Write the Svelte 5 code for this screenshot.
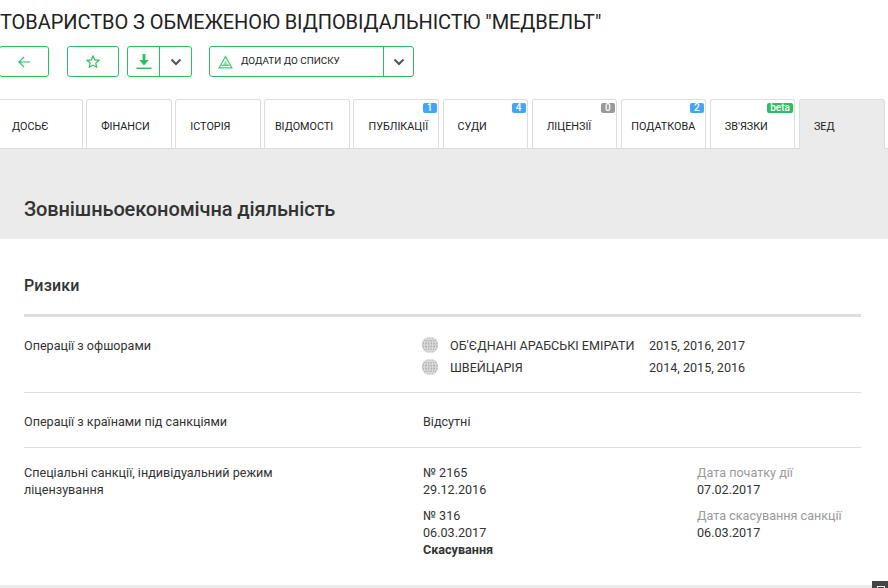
<script>
  const tabs = [
    { name: 'Досьє' },
    { name: 'Фінанси' },
    { name: 'Історія' },
    { name: 'Відомості', tight: true },
    { name: 'Публікації', badge: '1' },
    { name: 'Суди', badge: '4' },
    { name: 'Ліцензії', badge: '0', kind: 'grey' },
    { name: 'Податкова', badge: '2', tight: true },
    { name: "Зв'язки", badge: 'beta', kind: 'green' },
    { name: 'ЗЕД', active: true }
  ]
  const offshores = [
    { country: "Об'єднані Арабські Емірати", years: '2015, 2016, 2017' },
    { country: 'Швейцарія', years: '2014, 2015, 2016' }
  ]
</script>

{#snippet chevron()}
  <svg width="12" height="8" viewBox="0 0 12 8"><path d="M1.500 1.500 6 6l4.500-4.500" fill="none" stroke="#555" stroke-width="2" /></svg>
{/snippet}

{#snippet globe()}
  <svg class="globe" width="16" height="16" viewBox="0 0 16 16">
    <circle cx="8" cy="8" r="8" fill="#b5b5b5" />
    <g fill="none" stroke="#f4f4f4" stroke-width=".6">
      <ellipse cx="8" cy="8" rx="2.800" ry="8" />
      <ellipse cx="8" cy="8" rx="5.800" ry="8" />
      <path d="M8 0v16M0 8h16M.8 5h14.400M.8 11h14.400M2.500 2.300h11M2.500 13.700h11" />
    </g>
  </svg>
{/snippet}

<div class="page">
  <header>
    <h1>ТОВАРИСТВО З ОБМЕЖЕНОЮ ВІДПОВІДАЛЬНІСТЮ "МЕДВЕЛЬТ"</h1>
    <div class="actions">
      <button class="btn back" aria-label="Назад">
        <svg width="12" height="12" viewBox="0 0 12 12"><path d="M6 .8.9 6 6 11.200M.9 6H12" fill="none" stroke="#2dbe60" stroke-width="1.200" /></svg>
      </button>
      <button class="btn star" aria-label="Обране">
        <svg width="14" height="13" viewBox="0 0 14 13"><path d="m7 1 1.700 3.900 4.300.4-3.200 2.800.9 4.100L7 10.100l-3.700 2.100.9-4.100L1 5.300l4.300-.4z" fill="none" stroke="#2dbe60" stroke-width="1.200" /></svg>
      </button>
      <div class="btn split download">
        <span class="part dl">
          <svg width="16" height="16" viewBox="0 0 16 16"><path d="M8 0v8" stroke="#2dbe60" stroke-width="2.800" /><path d="M3.300 6 8 11.500 12.700 6z" fill="#2dbe60" /><path d="M.5 14.300h15" stroke="#2dbe60" stroke-width="1.500" /></svg>
        </span>
        <span class="part more">{@render chevron()}</span>
      </div>
      <div class="btn split addlist">
        <span class="part label">
          <svg width="15" height="14" viewBox="0 0 15 14">
            <path d="M7.500 1.500 13.800 12.800H1.200z" fill="none" stroke="#45c878" stroke-width="1.300" />
            <path d="M7.500 5 10 10H5z" fill="#8fe0ae" />
            <path d="M3.500 10.300h8" stroke="#2dbe60" stroke-width="1" />
          </svg>
          <span>Додати до списку</span>
        </span>
        <span class="part more">{@render chevron()}</span>
      </div>
    </div>
  </header>

  <nav>
    {#each tabs as tab}
      <div class="tab" class:active={tab.active} class:tight={tab.tight}>
        {tab.name}
        {#if tab.badge}
          <span class="badge {tab.kind ?? ''}">{tab.badge}</span>
        {/if}
      </div>
    {/each}
  </nav>

  <section class="hero">
    <h2>Зовнішньоекономічна діяльність</h2>
  </section>

  <main>
    <h3>Ризики</h3>

    <div class="row first">
      <div class="name">Операції з офшорами</div>
      <div class="offshores">
        {#each offshores as item}
          <div class="offshore">
            {@render globe()}
            <span class="country">{item.country}</span>
            <span>{item.years}</span>
          </div>
        {/each}
      </div>
    </div>

    <div class="row second">
      <div class="name">Операції з країнами під санкціями</div>
      <div>Відсутні</div>
    </div>

    <div class="row third">
      <div class="name narrow">Спеціальні санкції, індивідуальний режим ліцензування</div>
      <div class="sanctions">
        <div>№ 2165<br />29.12.2016</div>
        <div><span class="muted">Дата початку дії</span><br />07.02.2017</div>
        <div>№ 316<br />06.03.2017<br /><b>Скасування</b></div>
        <div><span class="muted">Дата скасування санкції</span><br />06.03.2017</div>
      </div>
    </div>
  </main>

  <footer>
    <span class="totop"><i></i></span>
  </footer>
</div>

<style>
  :global(body) {
    margin: 0;
    overflow: hidden;
  }
  .page {
    width: 888px;
    height: 588px;
    overflow: hidden;
    position: relative;
    background: #fff;
    font-family: Roboto, "Noto Sans", sans-serif;
    font-size: 12.6px;
    line-height: 17px;
    color: #333;
  }
  header {
    height: 99px;
    box-sizing: border-box;
    padding-top: 9px;
  }
  h1 {
    margin: 0;
    font-size: 20px;
    letter-spacing: -0.06px;
    line-height: 26px;
    font-weight: 400;
    color: #222;
    white-space: nowrap;
  }
  .actions {
    display: flex;
    align-items: stretch;
    height: 31px;
    margin-top: 11px;
  }
  .btn {
    display: flex;
    align-items: center;
    justify-content: center;
    box-sizing: border-box;
    padding: 0;
    background: #fff;
    border: 1px solid #2dbe60;
    border-radius: 3px;
  }
  .back {
    width: 50px;
    margin-left: -1px;
  }
  .star {
    width: 52px;
    margin-left: 18px;
  }
  .split {
    justify-content: flex-start;
  }
  .download {
    width: 65px;
    margin-left: 8px;
  }
  .addlist {
    width: 205px;
    margin-left: 17px;
  }
  .part {
    display: flex;
    align-items: center;
    justify-content: center;
    height: 100%;
  }
  .dl {
    width: 31px;
  }
  .more {
    flex: 1;
    border-left: 1px solid #2dbe60;
  }
  .label {
    width: 173px;
    justify-content: flex-start;
    box-sizing: border-box;
    padding: 0 0 2px 8px;
    gap: 8px;
    font-size: 9.9px;
    text-transform: uppercase;
    color: #222;
  }
  .label svg {
    margin-top: 2px;
  }
  nav {
    display: flex;
    gap: 3.5px;
    height: 49px;
    margin-left: -2.9px;
  }
  .tab {
    position: relative;
    width: 85.6px;
    box-sizing: border-box;
    height: 49px;
    padding: 18px 0 0 14px;
    border: 1px solid #ddd;
    border-bottom: 0;
    border-radius: 3px 3px 0 0;
    font-size: 10.8px;
    line-height: 17px;
    text-transform: uppercase;
    color: #222;
    white-space: nowrap;
  }
  .tab.tight {
    padding-left: 9.5px;
  }
  .tab.active {
    height: 50px;
    z-index: 1;
    background: #ebebeb;
  }
  .badge {
    position: absolute;
    top: 3px;
    right: 1.5px;
    min-width: 14px;
    box-sizing: border-box;
    height: 10px;
    padding: 0 3px;
    border-radius: 2px;
    background: #42a5f5;
    color: #fff;
    font-size: 10px;
    line-height: 10px;
    font-weight: 500;
    text-align: center;
    text-transform: none;
  }
  .badge.grey {
    background: #999;
  }
  .badge.green {
    background: #2dbe60;
  }
  .hero {
    position: relative;
    height: 91px;
    box-sizing: border-box;
    padding: 48px 24px 0;
    background: #ebebeb;
    border-top: 1px solid #ddd;
  }
  h2 {
    margin: 0;
    font-size: 20px;
    letter-spacing: -0.1px;
    line-height: 24px;
    font-weight: 500;
    color: #333;
  }
  main {
    margin: 0 27px 0 24px;
    padding-top: 36px;
  }
  h3 {
    margin: 0;
    padding-bottom: 18px;
    font-size: 16px;
    letter-spacing: 0.15px;
    line-height: 21px;
    font-weight: 500;
    border-bottom: 3px solid #ddd;
    color: #333;
  }
  .row {
    display: grid;
    grid-template-columns: 399px 1fr;
    border-bottom: 1px solid #ddd;
  }
  .row.first {
    height: 76px;
    padding-top: 20px;
    box-sizing: border-box;
  }
  .row.second {
    height: 55px;
    padding-top: 20px;
    box-sizing: border-box;
  }
  .row.third {
    padding-top: 16px;
    border-bottom: 0;
  }
  .narrow {
    width: 270px;
  }
  .offshores {
    margin-top: -3px;
  }
  .offshore {
    display: flex;
    align-items: center;
    height: 22px;
    margin-left: -1px;
  }
  .globe {
    margin-right: 12px;
  }
  .country {
    width: 199px;
    text-transform: uppercase;
    white-space: nowrap;
  }
  .sanctions {
    display: grid;
    grid-template-columns: 274px 1fr;
    row-gap: 9px;
  }
  .muted {
    color: #999;
  }
  b {
    font-weight: 700;
  }
  footer {
    position: absolute;
    left: 0;
    right: 0;
    bottom: 0;
    height: 3px;
    background: #ebebeb;
  }
  .totop {
    position: absolute;
    right: 0;
    top: -4px;
    width: 16px;
    height: 7px;
    background: #444;
  }
  .totop i {
    position: absolute;
    left: 5px;
    top: 5px;
    width: 6px;
    height: 4px;
    border: 1px solid #e8eef0;
  }
</style>
